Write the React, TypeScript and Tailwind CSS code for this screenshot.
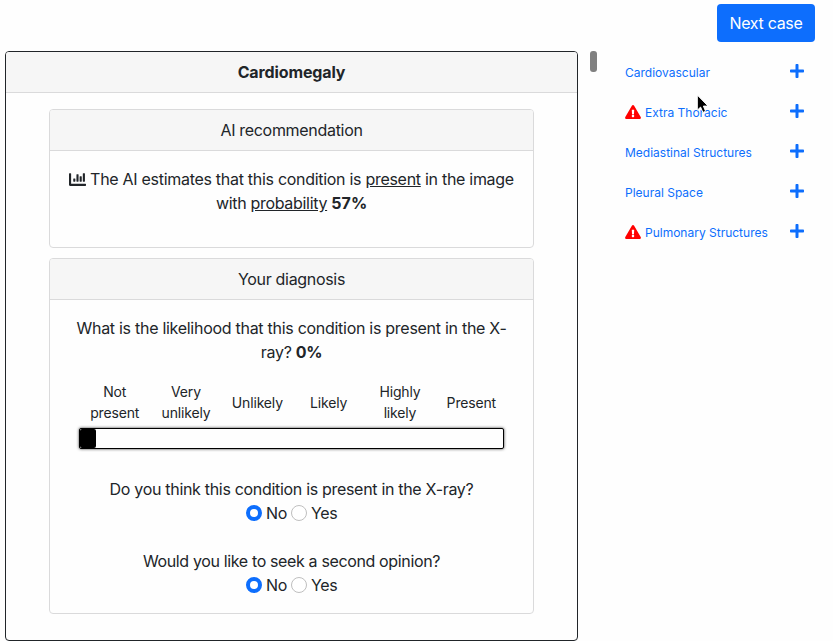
import type { ReactNode } from "react";
import { FaChartBar, FaExclamationTriangle, FaPlus } from "react-icons/fa";

const scale = [
  ["Not", "present"],
  ["Very", "unlikely"],
  ["Unlikely"],
  ["Likely"],
  ["Highly", "likely"],
  ["Present"],
];

const groups = [
  { name: "Cardiovascular", alert: false },
  { name: "Extra Thoracic", alert: true },
  { name: "Mediastinal Structures", alert: false },
  { name: "Pleural Space", alert: false },
  { name: "Pulmonary Structures", alert: true },
];

function Radio({ checked }: { checked: boolean }) {
  return (
    <span
      className={
        checked
          ? "h-4 w-4 shrink-0 rounded-full border-[4.5px] border-[#0d6efd] bg-white"
          : "h-4 w-4 shrink-0 rounded-full border border-[#bfbfbf] bg-white"
      }
    />
  );
}

function Choice() {
  return (
    <div className="flex h-6 items-center pl-[196px]">
      <Radio checked />
      <span className="ml-1 w-[25px] text-left">No</span>
      <Radio checked={false} />
      <span className="ml-1">Yes</span>
    </div>
  );
}

function Panel({ title, className, children }: { title: string; className: string; children: ReactNode }) {
  return (
    <section className={`overflow-hidden rounded-[4px] border border-[#dadadb] ${className}`}>
      <h3 className="flex h-[41px] items-center justify-center border-b border-[#dadadb] bg-[#f6f6f6]">{title}</h3>
      {children}
    </section>
  );
}

export default function App() {
  return (
    <main className="relative h-[641px] w-[833px] overflow-hidden bg-[#fefefe] font-[Inter,sans-serif] text-base leading-6 tracking-[-0.31px] text-[#212529]">
      <header className="flex h-[51px] justify-end pt-1 pr-[18px]">
        <button className="h-[38px] w-[98px] rounded-[4px] bg-[#0d6efd] text-white">Next case</button>
      </header>
      <div className="flex">
        <section className="ml-[5px] h-[590px] w-[573px] overflow-hidden rounded-[4px] border border-[#212529] text-center">
          <h2 className="flex h-[41px] items-center justify-center border-b border-[#dadadb] bg-[#f6f6f6] font-bold tracking-[-0.12px]">
            Cardiomegaly
          </h2>
          <div className="flex flex-col gap-[10px] pt-4 pr-[43px] pl-[43px]">
            <Panel title="AI recommendation" className="h-[139px]">
              <div className="pt-4 whitespace-nowrap">
                <p className="flex items-center justify-center tracking-[-0.29px]">
                  <FaChartBar className="mr-1 h-[17px] w-[17px]" />
                  <span>
                    The AI estimates that this condition is <u>present</u> in the image
                  </span>
                </p>
                <p>
                  with <u>probability</u> <b className="tracking-normal">57%</b>
                </p>
              </div>
            </Panel>
            <Panel title="Your diagnosis" className="h-[356px]">
              <div className="pt-4 whitespace-nowrap">
                <p className="tracking-[-0.28px]">What is the likelihood that this condition is present in the X-</p>
                <p>
                  ray? <b>0%</b>
                </p>
                <div className="mt-[17px] ml-[29px] grid h-[42px] w-[428px] grid-cols-6 items-center text-sm leading-[21px] tracking-[-0.16px]">
                  {scale.map((lines) => (
                    <div key={lines[0]}>
                      {lines.map((line) => (
                        <div key={line}>{line}</div>
                      ))}
                    </div>
                  ))}
                </div>
                <div className="mt-[5px] ml-[29px] h-[21px] w-[425px] rounded-[2px] border border-black bg-[#fefefe] shadow-[0_0_3px_#333]">
                  <div className="h-full w-4 rounded-[2px] bg-black" />
                </div>
                <p className="mt-7">Do you think this condition is present in the X-ray?</p>
                <Choice />
                <p className="mt-6 tracking-[-0.36px]">Would you like to seek a second opinion?</p>
                <Choice />
              </div>
            </Panel>
          </div>
        </section>
        <div className="ml-3 h-[21px] w-[7px] rounded-[3px] bg-[#808080]" />
        <nav className="ml-7 w-[179px] text-xs leading-6 tracking-normal text-[#0d6efd]">
          {groups.map((group) => (
            <div key={group.name} className="flex h-10 items-center">
              {group.alert && <FaExclamationTriangle className="mt-[2px] mr-1 h-[14px] w-4 text-[#ff0000]" />}
              <span className="mt-[3px] whitespace-nowrap">{group.name}</span>
              <FaPlus className="mr-[0.5px] ml-auto h-4 w-[14px]" />
            </div>
          ))}
        </nav>
      </div>
      <svg className="absolute top-[94px] left-[696px]" width="14" height="20" viewBox="0 0 14 20">
        <path d="M1.3 1v15.2l3.3-3.1 2.3 5.3 2.7-1.1-2.2-5.2h4.7z" fill="#000" stroke="#fff" strokeWidth="1" />
      </svg>
    </main>
  );
}
